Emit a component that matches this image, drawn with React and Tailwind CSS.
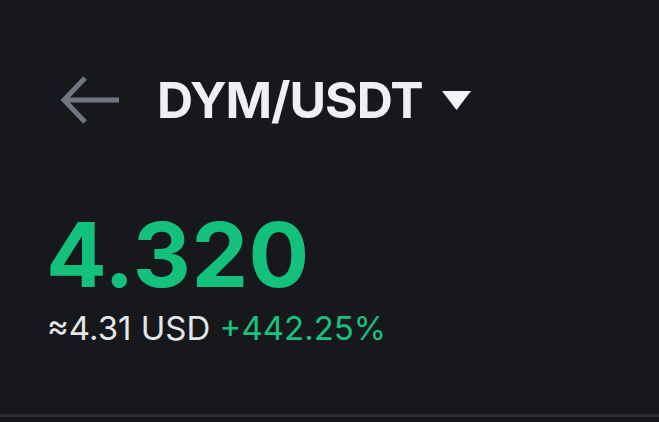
export default function App() {
  return (
    <div className="w-[659px] h-[422px] bg-[#17181c] flex flex-col overflow-hidden" style={{ fontFamily: 'Inter, "Noto Sans", sans-serif' }}>
      <div className="flex-1 flex flex-col pt-[76px]">
        <div className="flex items-center h-[48px] pl-[61px]">
          <svg width="58" height="48" viewBox="0 0 58 48" fill="none">
            <path d="M58 24H5M24 2L3 24L24 46" stroke="#6f7682" strokeWidth="5" strokeLinejoin="miter" />
          </svg>
          <span className="ml-[38px] text-[50px] font-bold leading-none text-[#eef0f3] tracking-[-1px]">DYM/USDT</span>
          <svg className="ml-[19px]" width="29" height="19" viewBox="0 0 29 19">
            <path d="M0 0H29L14.5 19Z" fill="#f3f4f6" />
          </svg>
        </div>
        <div className="pl-[46px] mt-[86px] text-[90px] font-bold leading-none text-[#13c07c] tracking-[0.5px]">4.320</div>
        <div className="pl-[47px] mt-[12px] text-[33px] leading-none tracking-[0px]">
          <span className="text-[#e3e5e8]">≈4.31 USD</span>
          <span className="text-[#17c17e]"> +442.25%</span>
        </div>
      </div>
      <div className="h-[3px] bg-[#2c2e33] mb-[5px]" />
    </div>
  );
}
